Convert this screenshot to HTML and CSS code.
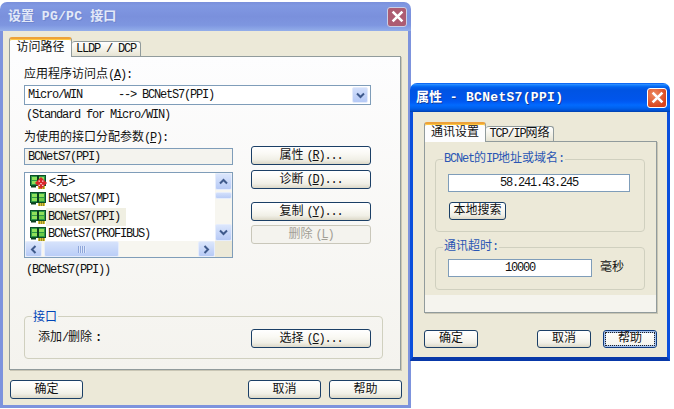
FILE: index.html
```html
<!DOCTYPE html>
<html lang="zh">
<head>
<meta charset="utf-8">
<title>设置 PG/PC 接口</title>
<link rel="stylesheet" href="styles.css">
</head>
<body>
<svg class="defs" width="0" height="0" aria-hidden="true">
  <symbol id="card" viewBox="0 0 16 14">
    <rect x="0" y="0" width="16" height="11" fill="#0b4f26"/>
    <rect x="1" y="1" width="14" height="9" fill="#2f9a48"/>
    <rect x="2" y="2" width="5" height="3" fill="#8fe05a"/>
    <rect x="9" y="2" width="5" height="3" fill="#8fe05a"/>
    <rect x="2" y="6" width="5" height="3" fill="#8fe05a"/>
    <rect x="9" y="6" width="5" height="3" fill="#6ccc48"/>
    <rect x="7" y="1" width="2" height="9" fill="#0b3f1e"/>
    <rect x="1" y="11" width="5" height="1.5" fill="#0b3f1e"/>
    <rect x="8" y="11" width="7" height="3" fill="#d8c43a"/>
    <path d="M9.5 11v3M11.5 11v3M13.5 11v3" stroke="#7d7420" stroke-width=".7"/>
  </symbol>
  <symbol id="up" viewBox="0 0 9 7"><path d="M1 5.5 4.5 2 8 5.5" fill="none" stroke="#3f5a8c" stroke-width="2"/></symbol>
  <symbol id="down" viewBox="0 0 9 7"><path d="M1 1.5 4.5 5 8 1.5" fill="none" stroke="#3f5a8c" stroke-width="2"/></symbol>
  <symbol id="left" viewBox="0 0 7 9"><path d="M5.5 1 2 4.5 5.5 8" fill="none" stroke="#3f5a8c" stroke-width="2"/></symbol>
  <symbol id="right" viewBox="0 0 7 9"><path d="M1.5 1 5 4.5 1.5 8" fill="none" stroke="#3f5a8c" stroke-width="2"/></symbol>
  <symbol id="x" viewBox="0 0 12 12"><path d="M1.5 1.5 10.5 10.5M10.5 1.5 1.5 10.5" fill="none" stroke="#fff" stroke-width="2.4"/></symbol>
</svg>

<section class="window win-main">
  <header class="title title-inactive">
    <span class="title-text">设置 <span class="tl">PG/PC</span> 接口</span>
    <span class="close close-inactive"><svg class="x-icon"><use href="#x"/></svg></span>
  </header>
  <div class="body body-inactive">
    <nav class="tabs">
      <span class="tab tab-on tab-main">访问路径</span>
      <span class="tab tab-off tab-lldp"><span class="l">LLDP / DCP</span></span>
    </nav>
    <div class="panel panel-main">
      <div class="line line-first">应用程序访问点<span class="l">(<u>A</u>):</span></div>
      <div class="combo">
        <span class="l combo-text">Micro/WIN      --&gt; BCNetS7(PPI)</span>
        <span class="combo-btn"><svg class="arrow-v"><use href="#down"/></svg></span>
      </div>
      <div class="line line-std"><span class="l">(Standard for Micro/WIN)</span></div>
      <div class="line line-assign">为使用的接口分配参数<span class="l">(<u>P</u>):</span></div>

      <div class="assign">
        <div class="assign-left">
          <div class="field field-name"><span class="l">BCNetS7(PPI)</span></div>
          <div class="listbox">
            <ul class="rows">
              <li class="row"><span class="icon"><svg class="card"><use href="#card"/></svg><svg class="none-mark" viewBox="0 0 10 10"><path d="M5 0 10 5 5 10 0 5Z" fill="#d9262a"/><path d="M3 3.5h1M6 3.5h1M4.5 5.5h1M3 7h1M6 7h1" stroke="#fff"/></svg></span><span class="row-label row-none">&lt;无&gt;</span></li>
              <li class="row"><span class="icon"><svg class="card"><use href="#card"/></svg></span><span class="row-label"><span class="l">BCNetS7(MPI)</span></span></li>
              <li class="row"><span class="icon"><svg class="card"><use href="#card"/></svg></span><span class="row-label row-selected"><span class="l">BCNetS7(PPI)</span></span></li>
              <li class="row"><span class="icon"><svg class="card"><use href="#card"/></svg></span><span class="row-label"><span class="l">BCNetS7(PROFIBUS)</span></span></li>
            </ul>
            <div class="vscroll">
              <span class="sb-btn sb-btn-v"><svg class="arrow-v"><use href="#up"/></svg></span>
              <span class="vthumb"></span>
              <span class="sb-space"></span>
              <span class="sb-btn sb-btn-v"><svg class="arrow-v"><use href="#down"/></svg></span>
            </div>
            <div class="hscroll">
              <span class="sb-btn sb-btn-h"><svg class="arrow-h"><use href="#left"/></svg></span>
              <span class="hthumb"><span class="grip"></span></span>
              <span class="sb-space"></span>
              <span class="sb-btn sb-btn-h"><svg class="arrow-h"><use href="#right"/></svg></span>
            </div>
            <div class="sb-corner"></div>
          </div>
        </div>
        <div class="assign-right">
          <button class="btn btn-wide">属性<span class="l acc">(<u>R</u>)...</span></button>
          <button class="btn btn-wide">诊断<span class="l acc">(<u>D</u>)...</span></button>
          <button class="btn btn-wide btn-gap">复制<span class="l acc">(<u>Y</u>)...</span></button>
          <button class="btn btn-wide btn-disabled">删除<span class="l acc">(<u>L</u>)</span></button>
        </div>
      </div>

      <div class="line line-current"><span class="l">(BCNetS7(PPI))</span></div>

      <fieldset class="group group-iface">
        <span class="legend legend-main">接口</span>
        <span>添加<span class="l">/</span>删除<span class="l colon">:</span></span>
        <button class="btn btn-wide">选择<span class="l acc">(<u>C</u>)...</span></button>
      </fieldset>
    </div>
    <footer class="footer footer-main">
      <button class="btn btn-main">确定</button>
      <span class="footer-right">
        <button class="btn btn-main">取消</button>
        <button class="btn btn-main">帮助</button>
      </span>
    </footer>
  </div>
</section>

<section class="window win-prop">
  <header class="title title-active">
    <span class="title-text">属性 <span class="tl">- BCNetS7(PPI)</span></span>
    <span class="close close-active"><svg class="x-icon"><use href="#x"/></svg></span>
  </header>
  <div class="body body-active">
    <nav class="tabs tabs-prop">
      <span class="tab tab-on tab-comm">通讯设置</span>
      <span class="tab tab-off tab-tcp"><span class="l">TCP/IP</span>网络</span>
    </nav>
    <div class="panel panel-prop">
      <div class="page">
        <fieldset class="group group-ip">
          <span class="legend legend-prop"><span class="l">BCNet</span>的<span class="l">IP</span>地址或域名<span class="l">:</span></span>
          <div class="field field-ip"><span class="l">58.241.43.245</span></div>
          <button class="btn btn-search">本地搜索</button>
        </fieldset>
        <fieldset class="group group-timeout">
          <span class="legend legend-prop">通讯超时<span class="l">:</span></span>
          <div class="field field-timeout"><span class="l">10000</span></div>
          <span>毫秒</span>
        </fieldset>
      </div>
    </div>
    <footer class="footer footer-prop">
      <button class="btn btn-prop">确定</button>
      <span class="footer-right footer-right-prop">
        <button class="btn btn-prop">取消</button>
        <button class="btn btn-prop btn-focus">帮助</button>
      </span>
    </footer>
  </div>
</section>
</body>
</html>
```

FILE: styles.css
```css
* { box-sizing: border-box; }
html, body { margin: 0; padding: 0; }
body {
  width: 674px;
  height: 409px;
  position: relative;
  overflow: hidden;
  background: #fff;
  color: #111;
  font: 12px/14px "Liberation Mono", "Noto Sans CJK SC", monospace;
}
.defs { position: absolute; }
.l { font-size: 12px; letter-spacing: -1.2px; white-space: pre; }
.acc { margin-left: 3px; }

/* windows on the desktop */
.window { position: absolute; display: flex; flex-direction: column; border-radius: 7px 7px 0 0; overflow: hidden; }
.win-main { left: 0; top: 2px; width: 411px; height: 406px; }
.win-prop { left: 410px; top: 83px; width: 260px; height: 278px; }

.title { flex: none; height: 29px; display: flex; align-items: center; justify-content: space-between; }
.title-text { font-size: 13px; line-height: 16px; font-weight: 700; color: #fff; white-space: pre; }
.tl { font-size: 13px; letter-spacing: .3px; }
.title-inactive { padding: 0 4px 0 8px; background: linear-gradient(#7a8fdb 0, #8098e2 12%, #7a90dc 50%, #7e96e0 80%, #93aeea 100%); }
.title-inactive .title-text { color: #e3e9f8; text-shadow: 1px 1px 0 #6f86cf; }
.title-active { padding: 0 3px 0 6px; background: linear-gradient(#0058ee 0, #2b8cff 5%, #0f78fb 9%, #0262ee 14%, #0054e3 24%, #0055eb 56%, #005bf5 66%, #026afe 76%, #0062ef 86%, #0052d6 94%, #0040ab 100%); }
.title-active .title-text { text-shadow: 1px 1px 0 #0f3c9e; }

.close { width: 20px; height: 20px; border: 1px solid #fff; border-radius: 3px; display: flex; align-items: center; justify-content: center; }
.close-inactive { background: #ad5c72; border-color: #c9cfe6; }
.close-active { background: radial-gradient(circle at 35% 30%, #ee8d63, #d9431c 75%); }
.x-icon { width: 13px; height: 13px; }

.body { flex: 1; display: flex; flex-direction: column; background: #ece9d8; }
.body-inactive { border: solid #7d93dd; border-width: 0 3px 3px; padding: 6px 7px 0 6px; }
.body-active { border: solid #0a4fdc; border-width: 0 3px 4px; border-bottom-color: #0838a8; padding: 10px 10px 0 11px; }

/* tabs */
.tabs { display: flex; align-items: flex-end; height: 19px; position: relative; z-index: 1; flex: none; }
.tab { display: flex; align-items: center; justify-content: center; white-space: pre; border: 1px solid #919b9c; border-bottom: 0; border-radius: 3px 3px 0 0; }
.tab-on { height: 20px; margin-bottom: -1px; background: #fdfdfe; border-top: 2px solid #eda23a; box-shadow: inset 0 1px 0 #ffc73c; }
.tab-off { height: 15px; background: linear-gradient(#fff, #f2f0e5 60%, #e6e3d3); border-left: 0; }
.tab-main { width: 63px; }
.tab-lldp { width: 69px; }
.tab-comm { width: 62px; }
.tab-tcp { width: 68px; }

/* panels */
.panel { border: 1px solid #919b9c; box-shadow: 1px 1px 0 #c9c6b5; flex: none; }
.panel-main { height: 314px; padding: 0 17px 0 14px; background: linear-gradient(#fdfdfe, #f4f3ee); }
.panel-prop { height: 172px; background: #f5f4ee; }
.page { background: #ece9d8; height: 153px; padding: 17px 11px 0 10px; }

.line { height: 14px; white-space: pre; }
.line-first { margin-top: 11px; }
.line-std { margin-top: 3px; padding-left: 2px; }
.line-assign { margin-top: 9px; }
.line-current { margin-top: 5px; padding-left: 2px; }

.combo { width: 347px; height: 20px; margin-top: 3px; border: 1px solid #7f9db9; background: #fff; display: flex; align-items: center; justify-content: space-between; padding: 0 1px 0 3px; }
.combo-btn { width: 16px; height: 16px; margin-right: 1px; background: linear-gradient(#d2dffb, #b5c9f6); border: 1px solid #e3ebfb; border-radius: 2px; display: flex; align-items: center; justify-content: center; }
.arrow-v { width: 9px; height: 7px; }
.arrow-h { width: 7px; height: 9px; }

.assign { display: flex; gap: 18px; width: 347px; height: 112px; margin-top: 1px; }
.assign-left { width: 209px; padding-top: 2px; }
.assign-right { width: 120px; display: flex; flex-direction: column; gap: 5px; }

.field { border: 1px solid #7f9db9; background: #fff; display: flex; align-items: center; }
.field-name { height: 17px; padding-left: 3px; background: #f4f3ee; }
.field-ip { width: 182px; height: 18px; justify-content: center; }
.field-timeout { width: 144px; height: 18px; justify-content: center; }

/* list box */
.listbox { width: 209px; height: 86px; margin-top: 7px; border: 1px solid #7f9db9; background: #fff; display: grid; grid-template-columns: 190px 17px; grid-template-rows: 68px 16px; }
.rows { list-style: none; margin: 0; padding: 0; overflow: hidden; }
.row { height: 17.5px; display: flex; align-items: center; padding-left: 5px; }
.icon { position: relative; width: 16px; height: 14px; flex: none; display: block; }
.card { width: 16px; height: 14px; display: block; }
.none-mark { position: absolute; right: -1px; top: 2px; width: 12px; height: 12px; }
.row-label { height: 100%; display: flex; align-items: center; padding: 0 6px 0 2px; }
.row-none { padding-left: 3px; }
.row-selected { background: #f0efe2; }

.vscroll { grid-column: 2; grid-row: 1; display: flex; flex-direction: column; background: #f7f6f0; }
.hscroll { grid-column: 1; grid-row: 2; display: flex; align-items: stretch; background: #f7f6f0; }
.sb-corner { background: #ece9d8; }
.sb-space { flex: 1; }
.sb-btn { flex: none; display: flex; align-items: center; justify-content: center; background: linear-gradient(#dbe6fc, #b7caf6); border: 1px solid #e6edfc; border-radius: 2px; }
.sb-btn-v { height: 17px; }
.sb-btn-h { width: 17px; }
.vthumb { height: 7px; margin-top: 2px; background: linear-gradient(#d2dffb, #b9ccf6); border: 1px solid #e6edfc; border-radius: 2px; }
.hthumb { width: 75px; margin-left: 2px; background: linear-gradient(#d6e2fb, #bacdf7); border: 1px solid #e6edfc; border-radius: 2px; display: flex; align-items: center; justify-content: center; }
.grip { width: 8px; height: 7px; background: repeating-linear-gradient(90deg, #8ea6da 0 1px, #dce6fb 1px 2px); }

/* groups */
.group { position: relative; margin: 0; padding: 0; border: 1px solid #d0d0bf; border-radius: 4px; min-width: 0; }
.legend { position: absolute; left: 7px; top: -8px; height: 14px; padding: 0 1px; color: #0046b8; white-space: pre; }
.legend-main { background: #f5f4ef; }
.legend-prop { background: #ece9d8; color: #2a56b4; }
.group-iface { width: 359px; height: 43px; margin-top: 39px; padding: 12px 11px 0 13px; display: flex; justify-content: space-between; align-items: flex-start; line-height: 19px; }
.colon { font-weight: 700; margin-left: 3px; }
.group-ip { height: 73px; padding: 14px 0 0 12px; }
.group-timeout { height: 43px; margin-top: 15px; padding: 0 0 2px 12px; display: flex; align-items: center; gap: 8px; }
.btn-search { width: 57px; height: 18px; margin: 10px 0 0 1px; font-size: 12px; }

/* buttons */
.btn { font: inherit; color: #111; padding: 0; border: 1px solid #1b3f66; border-radius: 3px; background: linear-gradient(#fff 0, #faf9f4 40%, #f0efe6 75%, #dcd8c8 100%); display: block; white-space: pre; }
.btn-wide { width: 120px; height: 19px; flex: none; }
.btn-gap { margin-top: 8px; margin-bottom: -1px; }
.btn-disabled { border-color: #c9c7ba; background: #f4f3ee; color: #a3a096; }
.btn-main { width: 73px; height: 19px; }
.btn-prop { width: 54px; height: 18px; }
.btn-focus { background: linear-gradient(#fff, #f4f3ea); box-shadow: inset 0 0 0 2px #a9c4ee; outline: 1px dotted #222; outline-offset: -3px; border-color: #0f3c80; }

.footer { display: flex; justify-content: space-between; flex: none; }
.footer-main { margin: 10px -1px 0 1px; }
.footer-prop { margin-top: 17px; }
.footer-right { display: flex; gap: 8px; }
.footer-right-prop { gap: 12px; }
```
